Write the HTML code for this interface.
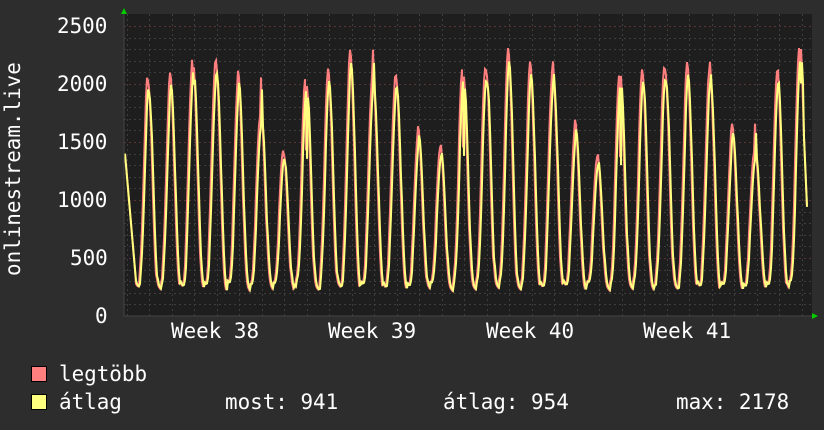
<!DOCTYPE html>
<html><head><meta charset="utf-8"><style>
html,body{margin:0;padding:0;background:#2d2d2d;}
body{width:824px;height:430px;overflow:hidden;position:relative;font-family:"DejaVu Sans Mono","Liberation Mono",monospace;color:#fff;}
.t{position:absolute;font-size:20.9px;line-height:20px;white-space:pre;}
.sq{position:absolute;width:14px;height:14px;border:1px solid #000;}
</style></head><body>
<svg id="g" width="824" height="430" style="position:absolute;left:0;top:0">
<rect x="124" y="14" width="688" height="302" fill="#1e1e1e"/>
<g id="grid"></g>
<g id="data"></g>
<path d="M121 14 L127 14 L124 8 Z" fill="#0c0"/>
<path d="M812 313 L812 319 L818 316 Z" fill="#0c0"/>
<line x1="124" y1="316" x2="812" y2="316" stroke="#444" stroke-width="1"/>
<line x1="124" y1="14" x2="124" y2="316" stroke="#444" stroke-width="1"/>
</svg>
<div class="t" style="left:57px;top:16px">2500</div>
<div class="t" style="left:57px;top:74px">2000</div>
<div class="t" style="left:57px;top:132px">1500</div>
<div class="t" style="left:57px;top:190px">1000</div>
<div class="t" style="left:70px;top:248px">500</div>
<div class="t" style="left:95px;top:306px">0</div>
<div class="t" style="left:3px;top:276px;transform:rotate(-90deg);transform-origin:0 0;">onlinestream.live</div>
<div class="t" style="left:171px;top:321px">Week 38</div>
<div class="t" style="left:328px;top:321px">Week 39</div>
<div class="t" style="left:486px;top:321px">Week 40</div>
<div class="t" style="left:643px;top:321px">Week 41</div>
<div class="sq" style="left:31px;top:366px;background:#ff7f7f"></div>
<div class="sq" style="left:31px;top:394px;background:#ffff7f"></div>
<div class="t" style="left:59px;top:364px">legtöbb</div>
<div class="t" style="left:59px;top:392px">átlag</div>
<div class="t" style="left:225px;top:392px">most: 941</div>
<div class="t" style="left:443px;top:392px">átlag: 954</div>
<div class="t" style="left:676px;top:392px">max: 2178</div>
<script>
var g=document.getElementById('grid'),d=document.getElementById('data'),ns='http://www.w3.org/2000/svg';
function L(x1,y1,x2,y2,c){var l=document.createElementNS(ns,'line');l.setAttribute('x1',x1);l.setAttribute('y1',y1);l.setAttribute('x2',x2);l.setAttribute('y2',y2);l.setAttribute('stroke',c);l.setAttribute('stroke-dasharray','2,3');l.setAttribute('stroke-width','1');g.appendChild(l);}
for(var v=100;v<=2500;v+=100){var y=Math.round(316-v*0.116)+0.5;L(124,y,812,y,v%500==0?'#5a3434':'#3e3e3e');}
for(var x=126.5;x<812;x+=22.5){L(Math.round(x)+0.5,14,Math.round(x)+0.5,316,'#3e3e3e');}
var pk=[[148,2030],[170,2100],[193,2200],[216,2170],[238,2100],[261,1750],[283,1450],[306,2060],[328,2150],[350,2300],[373,2070],[396,2050],[418,1620],[440,1480],[463,2150],[486,2150],[508,2330],[530,2200],[553,2100],[575,1680],[597,1400],[620,2100],[642,2150],[665,2150],[687,2200],[710,2100],[732,1650],[755,1450],[777,2150],[800,2340]];
function val(x,f){var i=0;while(i<pk.length-1&&pk[i+1][0]<x)i++;var a=pk[i],b=pk[Math.min(i+1,pk.length-1)];
var sp=22.5;var ph=((x-a[0])/sp);ph=ph-Math.floor(ph);
var sm=ph*ph*(3-2*ph);var h=a[1]+(b[1]-a[1])*sm;var c=Math.cos(ph*2*Math.PI);var s=Math.pow((1+c)/2,1.6);
var mn=240+((x*37)%40);return mn+(h*f-mn)*s+((x*53)%29-14)*2;}
function line(f,col,dx){var pts=[];for(var x=125;x<=807;x+=1){var v=val(x+dx,f);
if(x<136){var t=(x-125)/11;v=1400*(1-t)+300*t;}
if(x>803){v=941+(807-x)*200;}
pts.push(x+','+(316-v*0.116).toFixed(1));}
var p=document.createElementNS(ns,'polyline');p.setAttribute('points',pts.join(' '));p.setAttribute('fill','none');p.setAttribute('stroke',col);p.setAttribute('stroke-width','2');d.appendChild(p);}
line(1,'#ff7f7f',0);line(0.95,'#ffff7f',-1);
</script>
</body></html>
